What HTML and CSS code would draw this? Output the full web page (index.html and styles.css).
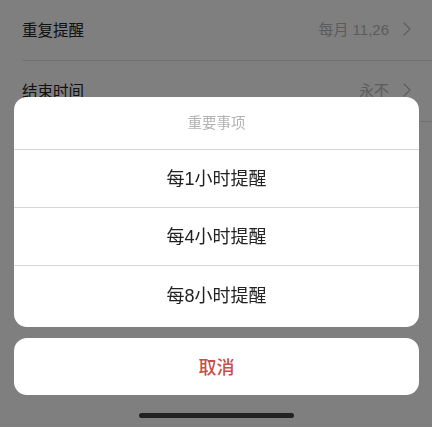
FILE: index.html
```html
<!DOCTYPE html>
<html lang="zh-CN">

<head>
    <meta charset="UTF-8">
    <meta name="viewport" content="width=device-width, initial-scale=1.0">
    <title>重复提醒</title>
    <link rel="stylesheet" href="styles.css">
</head>

<body>

    <!-- Settings list -->
    <div class="settings">
        <div class="row">
            <span class="row-label">重复提醒</span>
            <span class="row-value">每月 11,26</span>
            <svg class="chevron" viewBox="0 0 8 14" fill="none" stroke="currentColor" stroke-width="1.3"
                stroke-linecap="round" stroke-linejoin="round">
                <path d="M1 1l6 6-6 6"></path>
            </svg>
        </div>
        <div class="row">
            <span class="row-label">结束时间</span>
            <span class="row-value">永不</span>
            <svg class="chevron" viewBox="0 0 8 14" fill="none" stroke="currentColor" stroke-width="1.3"
                stroke-linecap="round" stroke-linejoin="round">
                <path d="M1 1l6 6-6 6"></path>
            </svg>
        </div>
    </div>

    <!-- Action sheet -->
    <div class="overlay">
        <div class="sheet">
            <div class="sheet-title">重要事项</div>
            <div class="sheet-option">每1小时提醒</div>
            <div class="sheet-option">每4小时提醒</div>
            <div class="sheet-option last">每8小时提醒</div>
        </div>
        <div class="sheet-cancel">取消</div>
        <div class="home-bar"></div>
    </div>

</body>

</html>
```

FILE: styles.css
```css
body {
    background-color: white;
    font-family: "Liberation Sans", "Noto Sans CJK SC", sans-serif;
    margin: 0;
    padding: 0;
}

.settings {
    padding-left: 22px;
}

.row {
    display: flex;
    align-items: center;
    box-sizing: border-box;
    height: 61px;
    padding: 0 21px 3px 0;
    border-bottom: 1px solid #e4e4e4;
}

.row-label {
    flex: 1;
    font-size: 15.5px;
    color: #222;
}

.row-value {
    font-size: 15px;
    color: #b8b8b8;
    margin-right: 14px;
}

.chevron {
    width: 8px;
    height: 14px;
    color: #bdbdbd;
}

/* Dimmed layer with the sheet on top */
.overlay {
    position: fixed;
    top: 0;
    left: 0;
    right: 0;
    bottom: 1px;
    background-color: rgba(0, 0, 0, 0.5);
    display: flex;
    flex-direction: column;
    justify-content: flex-end;
    padding: 0 13px 0 14px;
}

.sheet {
    background-color: white;
    border-radius: 13px;
    overflow: hidden;
}

.sheet-title {
    box-sizing: border-box;
    height: 53px;
    display: flex;
    align-items: center;
    justify-content: center;
    font-size: 14.5px;
    color: #b3b3b3;
    border-bottom: 1px solid #d6d6d6;
    padding-bottom: 3px;
}

.sheet-option {
    box-sizing: border-box;
    height: 58px;
    display: flex;
    align-items: center;
    justify-content: center;
    font-size: 18px;
    color: #222;
    border-bottom: 1px solid #d6d6d6;
    padding-bottom: 3px;
}

.sheet-option.last {
    height: 61px;
    padding-bottom: 6px;
    border-bottom: none;
}

.sheet-cancel {
    margin-top: 11px;
    box-sizing: border-box;
    height: 57px;
    padding-bottom: 2px;
    background-color: white;
    border-radius: 13px;
    display: flex;
    align-items: center;
    justify-content: center;
    font-size: 18px;
    font-weight: 500;
    color: #c4504c;
}

.home-bar {
    align-self: center;
    width: 155px;
    height: 5px;
    border-radius: 3px;
    background-color: #222;
    margin: 18px 0 9px;
}
```
